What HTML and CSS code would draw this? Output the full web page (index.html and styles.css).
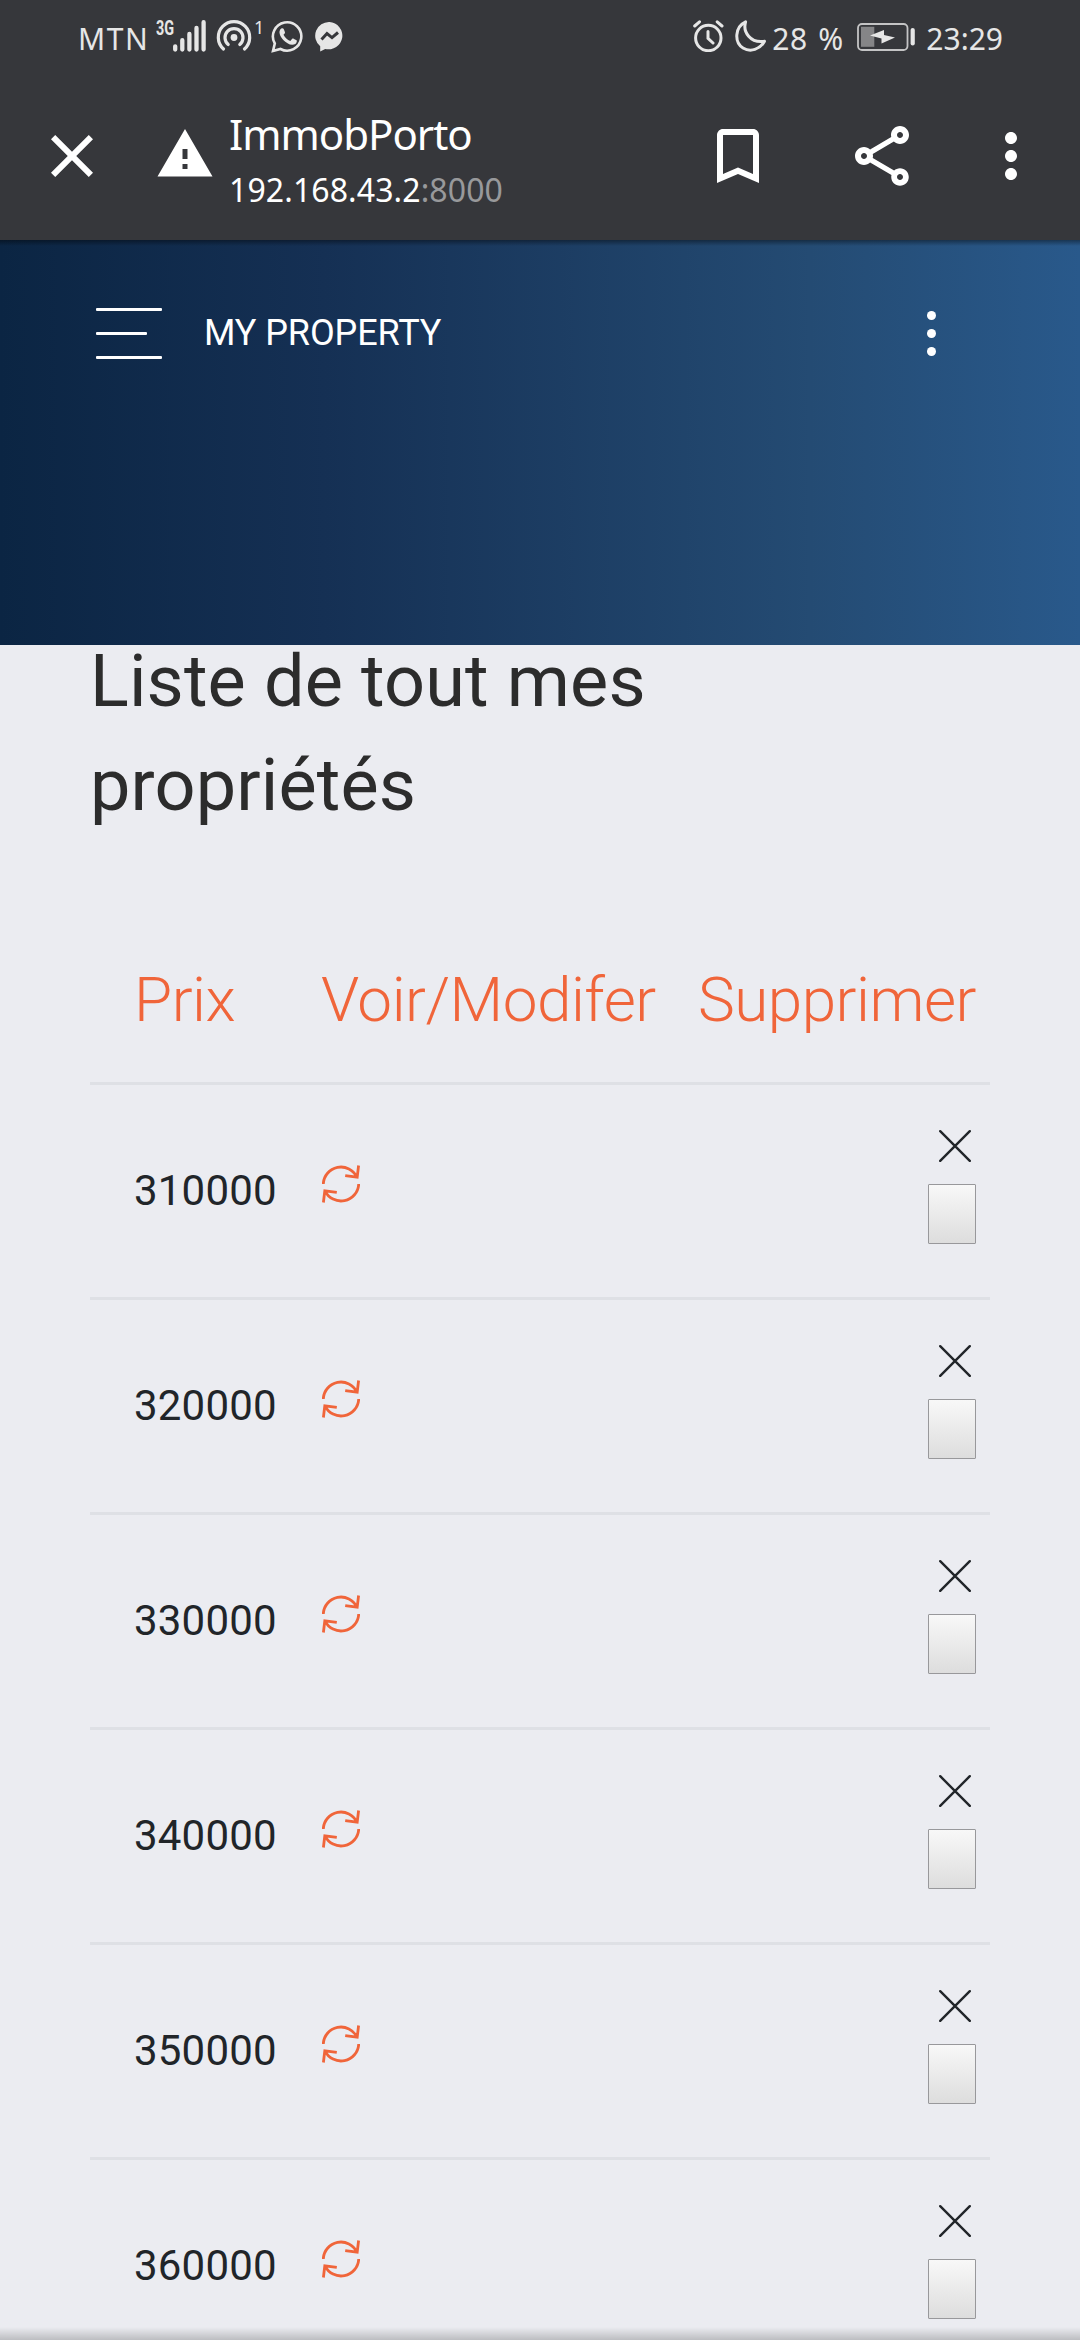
FILE: index.html
```html
<!DOCTYPE html>
<html lang="fr">
<head>
<meta charset="utf-8">
<title>ImmobPorto</title>
<link rel="stylesheet" href="styles.css">
</head>
<body>
<svg class="symbols" width="0" height="0">
  <symbol id="refresh" viewBox="0 0 38 38">
    <path d="M1.3 19A17.7 17.7 0 0 1 35 12.2M36.7 19A17.7 17.7 0 0 1 3 25.8M36.6 .5L35.2 12.2L23.2 10.6M1.4 37.5L2.8 25.8L14.8 27.4" fill="none" stroke="#f0653a" stroke-width="2.8"/>
  </symbol>
  <symbol id="cross" viewBox="0 0 32 32">
    <path d="M1.2 1.2L30.8 30.8M30.8 1.2L1.2 30.8" fill="none" stroke="#212529" stroke-width="2.4" stroke-linecap="round"/>
  </symbol>
</svg>
<div class="status">
  <div class="status-left">
    <span class="carrier">MTN</span>
    <span class="net">3G</span>
    <svg class="signal" width="33" height="32" viewBox="0 0 33 32"><path d="M2.2 26.3V29.5M9.3 20.2V29.5M16.4 14V29.5M23.5 8V29.5M30.6 2.2V29.5" stroke="#e6e6e6" stroke-width="4.3" stroke-linecap="round"/></svg>
    <svg class="hotspot" width="36" height="32" viewBox="0 0 36 32"><g fill="none" stroke="#e6e6e6" stroke-width="3.2" stroke-linecap="round"><path d="M7.5 29A15.7 15.7 0 1 1 28.5 29"/><path d="M12.2 24.5A9 9 0 1 1 23.8 24.5"/></g><circle cx="18" cy="17.5" r="3.4" fill="#e6e6e6"/></svg>
    <span class="one">1</span>
    <svg class="whatsapp" width="33" height="33" viewBox="0 0 33 33"><path d="M3.8 23.5A14.2 14.2 0 1 1 9.5 29L2 31Z" fill="none" stroke="#e6e6e6" stroke-width="2.6"/><path d="M10.3 8.5C11.3 8 12.2 8 12.7 9L14 12.2C14.2 13.2 13 14.2 12.5 14.8C14 17.8 16.3 19.8 19.3 21L21.2 18.8C21.8 18.3 22.4 18.6 23 18.9L25.6 20.3C26.3 20.8 25.5 23.3 24.3 24C20.5 26.2 15.5 23.4 12.3 20C9 16.3 6.7 11.2 10.3 8.5Z" fill="#e6e6e6"/></svg>
    <svg class="messenger" width="29" height="30" viewBox="0 0 29 30"><path d="M14.5 0A14 13.7 0 1 1 10.2 27L5.2 29.5V24.2A14 13.7 0 0 1 14.5 0Z" fill="#e6e6e6"/><path d="M6.5 17.5L12 11.6L17 15.6L23 10.5" fill="none" stroke="#36373b" stroke-width="3"/></svg>
  </div>
  <div class="status-right">
    <svg class="alarm" width="31" height="32" viewBox="0 0 31 32"><g fill="none" stroke="#e6e6e6"><circle cx="15.3" cy="18" r="12.7" stroke-width="3"/><path d="M15 11.5V18.3L20 23M1.7 6L6.5 1.8M29 6L24.2 1.8" stroke-width="3" stroke-linecap="round"/></g></svg>
    <svg class="moon" width="32" height="32" viewBox="0 0 32 32"><path d="M10.6 1.8C7.5 12 15.5 23.5 29.5 21.3C25 29.5 15.5 32.5 8 28C-.8 22.5 -.5 7 10.6 1.8Z" fill="none" stroke="#e6e6e6" stroke-width="3" stroke-linejoin="round"/></svg>
    <span class="percent">28 %</span>
    <svg class="battery" width="59" height="28" viewBox="0 0 59 28"><rect x="1" y="1" width="49.5" height="26" rx="4" fill="none" stroke="#c4c4c5" stroke-width="1.8"/><rect x="4" y="3.8" width="13.3" height="20" fill="#858587"/><path d="M55.7 7V20.5" stroke="#e6e6e6" stroke-width="4.2" stroke-linecap="round"/><path d="M13 12.6L27 7V12L38 14.5L24.5 20.5V15.5Z" fill="#e6e6e6"/></svg>
    <span class="clock">23:29</span>
  </div>
</div>
<div class="toolbar">
  <svg class="close" width="72" height="72" viewBox="0 0 24 24"><path fill="#fff" d="M19 6.41L17.59 5 12 10.59 6.41 5 5 6.41 10.59 12 5 17.59 6.41 19 12 13.41 17.59 19 19 17.59 13.41 12z"/></svg>
  <svg class="warn" width="60" height="60" viewBox="0 0 24 24"><path fill="#fff" d="M1 21h22L12 2 1 21zm12-3h-2v-2h2v2zm0-4h-2v-4h2v4z"/></svg>
  <div class="site">
    <div class="site-title">ImmobPorto</div>
    <div class="site-url">192.168.43.2<span class="port">:8000</span></div>
  </div>
  <svg class="bookmark" width="72" height="72" viewBox="0 0 24 24"><path fill="#fff" d="M17 3H7c-1.1 0-2 .9-2 2v16l7-3 7 3V5c0-1.1-.9-2-2-2zm0 15l-5-2.18L7 18V5h10v13z"/></svg>
  <svg class="share" width="72" height="72" viewBox="0 0 24 24"><path fill="#fff" d="M18 16.08c-.76 0-1.44.3-1.96.77L8.91 12.7c.05-.23.09-.46.09-.7s-.04-.47-.09-.7l7.05-4.11c.54.5 1.25.81 2.04.81 1.66 0 3-1.34 3-3s-1.34-3-3-3-3 1.34-3 3c0 .24.04.47.09.7L8.04 9.81C7.5 9.31 6.79 9 6 9c-1.66 0-3 1.34-3 3s1.34 3 3 3c.79 0 1.5-.31 2.04-.81l7.12 4.16c-.05.21-.08.43-.08.65 0 1.61 1.31 2.92 2.92 2.92s2.92-1.31 2.92-2.92-1.31-2.92-2.92-2.92zM18 4c.55 0 1 .45 1 1s-.45 1-1 1-1-.45-1-1 .45-1 1-1zM6 13c-.55 0-1-.45-1-1s.45-1 1-1 1 .45 1 1-.45 1-1 1zm12 7.02c-.55 0-1-.45-1-1s.45-1 1-1 1 .45 1 1-.45 1-1 1z"/></svg>
  <svg class="more" width="72" height="72" viewBox="0 0 24 24"><path fill="#fff" d="M12 8c1.1 0 2-.9 2-2s-.9-2-2-2-2 .9-2 2 .9 2 2 2zm0 2c-1.1 0-2 .9-2 2s.9 2 2 2 2-.9 2-2-.9-2-2-2zm0 6c-1.1 0-2 .9-2 2s.9 2 2 2 2-.9 2-2-.9-2-2-2z"/></svg>
</div>
<header class="hero">
  <div class="menu"><i></i><i class="short"></i><i></i></div>
  <div class="brand">MY PROPERTY</div>
  <div class="dots"><i></i><i></i><i></i></div>
</header>
<main class="content">
  <h1 class="heading">Liste de tout mes propriétés</h1>
  <div class="row head"><span>Prix</span><span>Voir/Modifer</span><span>Supprimer</span></div>
  <div class="row"><span class="price">310000</span><svg class="refresh"><use href="#refresh"/></svg><div class="del"><svg class="cross"><use href="#cross"/></svg><button class="btn"></button></div></div>
  <div class="row"><span class="price">320000</span><svg class="refresh"><use href="#refresh"/></svg><div class="del"><svg class="cross"><use href="#cross"/></svg><button class="btn"></button></div></div>
  <div class="row"><span class="price">330000</span><svg class="refresh"><use href="#refresh"/></svg><div class="del"><svg class="cross"><use href="#cross"/></svg><button class="btn"></button></div></div>
  <div class="row"><span class="price">340000</span><svg class="refresh"><use href="#refresh"/></svg><div class="del"><svg class="cross"><use href="#cross"/></svg><button class="btn"></button></div></div>
  <div class="row"><span class="price">350000</span><svg class="refresh"><use href="#refresh"/></svg><div class="del"><svg class="cross"><use href="#cross"/></svg><button class="btn"></button></div></div>
  <div class="row"><span class="price">360000</span><svg class="refresh"><use href="#refresh"/></svg><div class="del"><svg class="cross"><use href="#cross"/></svg><button class="btn"></button></div></div>
</main>
<div class="bottom-shade"></div>
</body>
</html>
```
FILE: styles.css
```css
* { box-sizing: border-box; }
html, body { margin: 0; height: 2340px; overflow: hidden; }
body { position: relative; width: 1080px; background: #ebecf1; font-family: Roboto, sans-serif; }
svg { display: block; flex: none; }
.symbols { display: none; }

.status { display: flex; justify-content: space-between; height: 72px; padding: 0 77px 0 78px; background: #36373b; color: #e6e6e6; font: 30px/41px "Noto Sans", sans-serif; white-space: nowrap; }
.status-left, .status-right { display: flex; align-items: flex-start; }
.carrier, .percent, .clock { padding-top: 18px; }
.carrier { width: 78px; letter-spacing: 1.6px; }
.net { width: 17px; margin-top: 17px; font: bold 20px/22px Roboto, sans-serif; transform: scaleX(.72); transform-origin: 0 0; }
.signal { margin-top: 20px; }
.hotspot { margin: 20px 0 0 10px; }
.one { width: 15px; margin: 15px 0 0 2px; font: 18px/24px "Noto Sans", sans-serif; }
.whatsapp { margin: 20px 0 0 2px; }
.messenger { margin: 22px 0 0 11px; }
.alarm { margin-top: 20px; }
.moon { margin: 20px 5px 0 11px; }
.percent { width: 85px; letter-spacing: .6px; word-spacing: 2px; }
.battery { margin: 23px 10px 0 0; }

.toolbar { display: flex; align-items: center; height: 168px; padding: 0 33px 0 36px; background: #36373b; color: #fff; font-family: "Noto Sans", sans-serif; }
.warn { margin: -4px 14px 0 47px; }
.site { width: 473px; margin-top: 5px; white-space: nowrap; }
.site-title { font-size: 42px; line-height: 58px; letter-spacing: -1px; }
.site-url { margin-top: 5px; font-size: 32px; line-height: 44px; letter-spacing: .1px; }
.port { color: #98999b; }
.share { margin: 0 57px 0 72px; }

.hero { display: flex; align-items: flex-start; height: 405px; padding: 68px 144px 0 96px; color: #fff; background: linear-gradient(#0006, #0000 6px), linear-gradient(90deg, #0b2543, #153054 30%, #244b73 75%, #29598b); }
.menu { display: flex; flex-direction: column; gap: 21px; width: 66px; }
.menu i { height: 3px; border-radius: 1px; background: #fff; }
.menu .short { width: 51px; }
.brand { flex: 1; margin: 4px 0 0 42px; font-size: 36px; line-height: 42px; letter-spacing: -.1px; }
.dots { display: flex; flex-direction: column; gap: 9px; padding-top: 3px; }
.dots i { width: 9px; height: 9px; border-radius: 50%; background: #fff; }

.content { margin: -15px 90px 0; }
.heading { max-width: 800px; margin: 0; color: #2c2c2c; font-size: 72px; font-weight: 400; line-height: 104px; letter-spacing: .15px; }
.row { display: grid; grid-template-columns: 187px 1fr auto; align-items: center; height: 215px; padding: 0 14px 0 44px; border-bottom: 3px solid #dee0e5; }
.head { grid-template-columns: 187px 377px 1fr; height: 247px; padding-top: 78px; padding-right: 0; color: #f0653a; font-size: 62px; font-weight: 300; letter-spacing: -.5px; white-space: nowrap; }
.price { padding-bottom: 2px; color: #212529; font-size: 42px; letter-spacing: .2px; }
.refresh { width: 38px; height: 38px; margin: -14px 0 0 1px; }
.del { display: flex; flex-direction: column; align-items: flex-end; gap: 22px; padding-bottom: 9px; }
.cross { width: 32px; height: 32px; margin-right: 5px; }
.btn { width: 48px; height: 60px; padding: 0; border: 1px solid #98989b; border-radius: 1px; background: linear-gradient(#f8f8f8, #ddd); }
.bottom-shade { position: absolute; left: 0; right: 0; bottom: 0; height: 13px; background: linear-gradient(#0000, #0003); }
```
